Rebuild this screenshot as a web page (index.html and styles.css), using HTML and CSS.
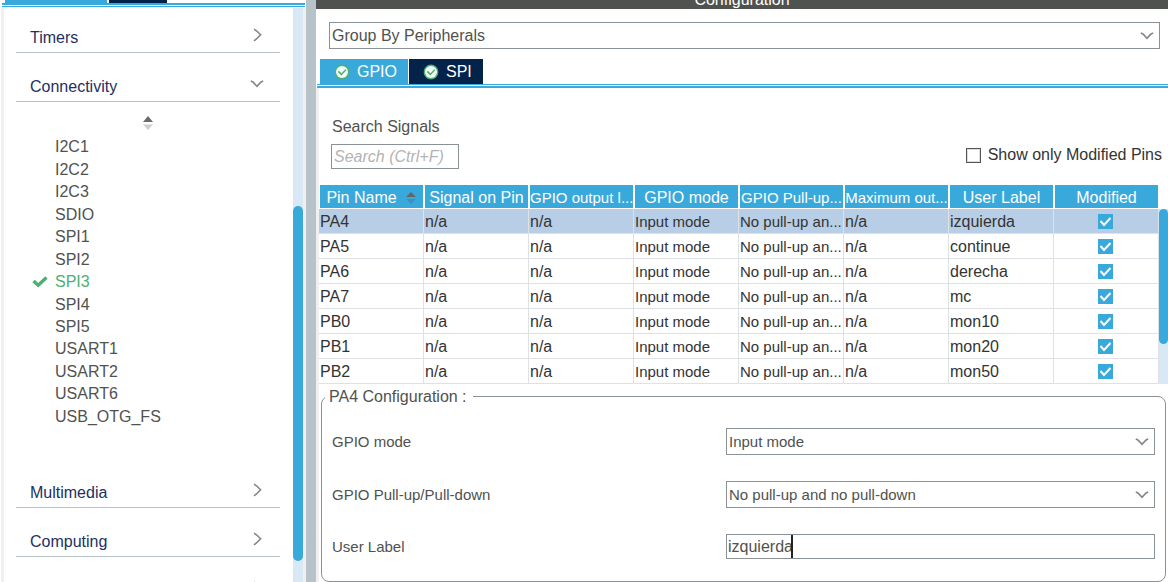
FILE: index.html
```html
<!DOCTYPE html>
<html lang="en">
<head>
<meta charset="utf-8">
<title>Configuration</title>
<link rel="stylesheet" href="styles.css">
</head>
<body>
<svg class="defs" aria-hidden="true">
  <symbol id="right" viewBox="0 0 10 14"><path d="M1 1.2 3.5 2.8 7.6 6.8 3.5 11 1 12.8" fill="none" stroke="#858585" stroke-width="1.6"/></symbol>
  <symbol id="down" viewBox="0 0 14 8"><path d="M.8 .9 3.2 2.2 7 6.300 10.8 2.2 13.2 .9" fill="none" stroke="#858585" stroke-width="1.6"/></symbol>
  <symbol id="ok" viewBox="0 0 16 16"><circle cx="8" cy="8" r="7.4" fill="#4cb072"/><circle cx="8" cy="8" r="6" fill="#f4faf5"/><path d="M4.3 7.4 7.3 10.4 11.8 5.8" fill="none" stroke="#4cb072" stroke-width="1.5"/></symbol>
</svg>
<div class="app">
  <aside class="sidebar">
    <div class="side-tabs"><span class="side-tab"></span><span class="side-tab dark"></span></div>
    <div class="side-body">
      <nav class="categories">
        <button class="category">Timers<svg class="right"><use href="#right"/></svg></button>
        <button class="category">Connectivity<svg class="down"><use href="#down"/></svg></button>
        <div class="group">
          <svg class="sorter" viewBox="0 0 12 14"><path d="M1 6 6 0 11 6Z" fill="#6b6b6b"/><path d="M1 8.500H11L6 14Z" fill="#cfcfcf"/></svg>
          <ul class="peripherals">
            <li>I2C1</li><li>I2C2</li><li>I2C3</li><li>SDIO</li><li>SPI1</li><li>SPI2</li>
            <li class="active"><svg viewBox="0 0 16 12"><path d="M1.500 5 6.200 9.300 14.500 1.500" fill="none" stroke="#4cb072" stroke-width="3.400"/></svg>SPI3</li>
            <li>SPI4</li><li>SPI5</li><li>USART1</li><li>USART2</li><li>USART6</li><li>USB_OTG_FS</li>
          </ul>
        </div>
        <button class="category">Multimedia<svg class="right"><use href="#right"/></svg></button>
        <button class="category">Computing<svg class="right"><use href="#right"/></svg></button>
        <button class="category" aria-label="More"><svg class="right last"><use href="#right"/></svg></button>
      </nav>
      <div class="side-scroll"><div class="side-thumb"></div></div>
    </div>
  </aside>
  <div class="splitter"></div>
  <main class="main">
    <header class="title">Configuration</header>
    <div class="combo group-by">
      <select aria-label="Group by"><option>Group By Peripherals</option></select>
      <svg><use href="#down"/></svg>
    </div>
    <div class="tabs">
      <button class="tab"><svg><use href="#ok"/></svg>GPIO</button>
      <button class="tab dark"><svg><use href="#ok"/></svg>SPI</button>
    </div>
    <section class="panel">
      <div class="filters">
        <div class="search">
          <label for="search">Search Signals</label>
          <input id="search" type="text" placeholder="Search (Ctrl+F)">
        </div>
        <label class="only"><input type="checkbox" class="box">Show only Modified Pins</label>
      </div>
      <div class="pins">
        <table>
          <thead>
            <tr>
              <th><span class="sortable">Pin Name<svg viewBox="0 0 12 14"><path d="M1 6 6 1 11 6Z" fill="#666"/><path d="M1 8H11L6 13Z" fill="#3f91bb"/></svg></span></th>
              <th>Signal on Pin</th><th class="compact">GPIO output l...</th><th>GPIO mode</th><th class="compact">GPIO Pull-up...</th><th class="compact">Maximum out...</th><th>User Label</th><th>Modified</th>
            </tr>
          </thead>
          <tbody>
            <tr class="selected"><td>PA4</td><td>n/a</td><td>n/a</td><td class="compact">Input mode</td><td class="compact">No pull-up an...</td><td>n/a</td><td>izquierda</td><td><input type="checkbox" class="tick" aria-label="PA4 modified" checked></td></tr>
            <tr><td>PA5</td><td>n/a</td><td>n/a</td><td class="compact">Input mode</td><td class="compact">No pull-up an...</td><td>n/a</td><td>continue</td><td><input type="checkbox" class="tick" aria-label="PA5 modified" checked></td></tr>
            <tr><td>PA6</td><td>n/a</td><td>n/a</td><td class="compact">Input mode</td><td class="compact">No pull-up an...</td><td>n/a</td><td>derecha</td><td><input type="checkbox" class="tick" aria-label="PA6 modified" checked></td></tr>
            <tr><td>PA7</td><td>n/a</td><td>n/a</td><td class="compact">Input mode</td><td class="compact">No pull-up an...</td><td>n/a</td><td>mc</td><td><input type="checkbox" class="tick" aria-label="PA7 modified" checked></td></tr>
            <tr><td>PB0</td><td>n/a</td><td>n/a</td><td class="compact">Input mode</td><td class="compact">No pull-up an...</td><td>n/a</td><td>mon10</td><td><input type="checkbox" class="tick" aria-label="PB0 modified" checked></td></tr>
            <tr><td>PB1</td><td>n/a</td><td>n/a</td><td class="compact">Input mode</td><td class="compact">No pull-up an...</td><td>n/a</td><td>mon20</td><td><input type="checkbox" class="tick" aria-label="PB1 modified" checked></td></tr>
            <tr><td>PB2</td><td>n/a</td><td>n/a</td><td class="compact">Input mode</td><td class="compact">No pull-up an...</td><td>n/a</td><td>mon50</td><td><input type="checkbox" class="tick" aria-label="PB2 modified" checked></td></tr>
          </tbody>
        </table>
        <div class="pin-scroll"><div class="pin-thumb"></div></div>
      </div>
      <fieldset class="config">
        <legend>PA4 Configuration :</legend>
        <div class="fields">
          <label for="mode">GPIO mode</label>
          <div class="combo"><select id="mode"><option>Input mode</option></select><svg><use href="#down"/></svg></div>
          <label for="pull">GPIO Pull-up/Pull-down</label>
          <div class="combo"><select id="pull"><option>No pull-up and no pull-down</option></select><svg><use href="#down"/></svg></div>
          <label for="user">User Label</label>
          <div class="entry"><input id="user" type="text" value="izquierda"><span class="caret"></span></div>
        </div>
      </fieldset>
    </section>
  </main>
</div>
</body>
</html>
```
FILE: styles.css
```css
* { box-sizing: border-box; }
body { margin: 0; font: 16px/18px "Liberation Sans", Arial, sans-serif; color: #505250; background: #fff; }
button, input, select { font: inherit; color: inherit; margin: 0; }
svg { display: block; flex: none; }
.defs { position: absolute; width: 0; height: 0; }
.app { display: flex; height: 100vh; overflow: hidden; }

.sidebar { flex: none; width: 306px; display: flex; flex-direction: column; padding-left: 1px; }
.side-tabs { flex: none; display: flex; gap: 2px; height: 8px; margin-left: 1px; margin-right: 1px; padding-left: 3px; padding-bottom: 5px;
  background: linear-gradient(#fff 3px, #39a9dc 3px, #39a9dc 5px, #fff 5px, #fff 6px, #39a9dc 6px, #39a9dc 7px, #f0f0f0 7px); }
.side-tab { width: 102px; background: #39a9dc; }
.side-tab.dark { width: 58px; background: #03234b; }
.side-body { flex: 1; min-height: 0; display: flex; border-left: 3px solid #f0f0f0; border-right: 3px solid #f0f0f0; }
.categories { flex: 1; padding: 0 13px 0 12px; margin-top: -4px; }
.category { display: flex; justify-content: space-between; align-items: flex-end; width: 100%; height: 49px; padding: 0 16px 5px 14px;
  background: none; border: 0; border-bottom: 1px solid #b8c3c9; color: #23305f; text-align: left; }
.category .right { width: 10px; height: 14px; margin: 0 1px 5px 0; }
.category .down { width: 14px; height: 8px; margin-bottom: 8px; }
.category .last { margin-left: auto; }
.group { padding: 14px 0 31px; }
.sorter { width: 12px; height: 14px; margin: 0 auto 6px; }
.peripherals { list-style: none; margin: 0; padding: 0; height: 292px; display: flex; flex-direction: column; }
.peripherals li { flex: 1; display: flex; align-items: center; padding-left: 39px; }
.peripherals .active { padding-left: 16px; color: #4cb072; }
.peripherals svg { width: 16px; height: 12px; margin-right: 7px; }
.side-scroll { width: 10px; background: #d8e8f5; padding: 198px 0 21px; }
.side-thumb { height: 100%; border-radius: 5px; background: #39a9dc; }
.splitter { flex: none; width: 10px; background: #b8c3c9; }

.main { flex: 1; min-width: 0; display: flex; flex-direction: column; }
.title { flex: none; display: flex; align-items: flex-end; justify-content: center; height: 9px; background: #505250; color: #fff; overflow: hidden; }
.combo { position: relative; }
.combo select { appearance: none; display: block; width: 100%; height: 27px; padding: 1px 24px 0 2px; border: 1px solid #8b9297; border-radius: 0; background: #fff; }
.combo svg { position: absolute; right: 6px; top: 10px; width: 14px; height: 8px; pointer-events: none; }
.group-by { margin: 13px 8px 10px 13px; }
.tabs { flex: none; display: flex; gap: 1px; margin-left: 1px; padding: 0 0 4px 3px; background: linear-gradient(#fff 25px, #39a9dc 25px, #39a9dc 26px, #fff 26px, #fff 27px, #39a9dc 27px); }
.tab { display: flex; align-items: center; gap: 7px; height: 25px; padding: 0 11px 0 14px; border: 0; background: #39a9dc; color: #fff; }
.tab.dark { background: #03234b; }
.tab svg { width: 16px; height: 16px; }
.panel { flex: 1; border-left: 3px solid #f0f0f0; }
.filters { display: flex; justify-content: space-between; align-items: flex-end; padding: 30px 6px 15px 12px; }
.search { display: flex; flex-direction: column; gap: 8px; }
.search label { padding-left: 1px; }
.search input { width: 128px; height: 25px; padding: 1px 2px 0; border: 1px solid #8b9297; background: #fff; }
.search input::placeholder { color: #b3b3b3; font-style: italic; opacity: 1; }
.only { display: flex; align-items: center; gap: 7px; color: #333; padding-bottom: 5px; }
.box { appearance: none; width: 15px; height: 15px; border: 1px solid #555; background: #fff; box-shadow: inset 0 0 0 1px #ddd; }
.pins { display: flex; align-items: stretch; }
table { flex: 1; min-width: 0; table-layout: fixed; width: 100%; border-collapse: separate; border-spacing: 0; color: #333; }
th, td { white-space: nowrap; }
th { height: 25px; padding: 2px 0 0; font-weight: 400; text-align: center; color: #fff; background: #39a9dc; border: 1px solid #fff; }
.compact { font-size: 15px; }
.sortable { display: flex; justify-content: center; align-items: center; gap: 8px; }
.sortable svg { width: 12px; height: 14px; }
td { height: 25px; padding: 2px 0 0 1px; border-right: 1px solid #dee2e6; border-bottom: 1px solid #dee2e6; }
td:last-child { text-align: center; padding: 0 2px 0 0; }
.selected td { background: #b8cee6; }
.tick { appearance: none; display: block; width: 15px; height: 15px; margin: 0 auto;
  background: #39a9dc url("data:image/svg+xml,%3Csvg xmlns='http://www.w3.org/2000/svg' viewBox='0 0 15 15'%3E%3Cpath d='M2.500 7 6 11 12.500 4' fill='none' stroke='white' stroke-width='2'/%3E%3C/svg%3E"); }
.pin-scroll { width: 9px; margin-top: 25px; background: #d8e8f5; }
.pin-thumb { height: 135px; border-radius: 5px; background: #39a9dc; }
.config { margin: 2px 2px 0; padding: 22px 10px; border: 1px solid #8b9297; border-radius: 8px; }
.config legend { margin-left: -7px; padding: 2px 6px 0 4px; }
.fields { display: grid; grid-template-columns: 394px 1fr; row-gap: 26px; align-items: center; }
.fields label, .fields select { font-size: 15px; }
.fields label { padding-top: 1px; }
.entry { position: relative; }
.entry input { display: block; width: 100%; height: 25px; padding: 1px 1px 0; border: 1px solid #8b9297; background: #fff; }
.caret { position: absolute; left: 65px; top: 1px; width: 2px; height: 23px; background: #222; }
```
